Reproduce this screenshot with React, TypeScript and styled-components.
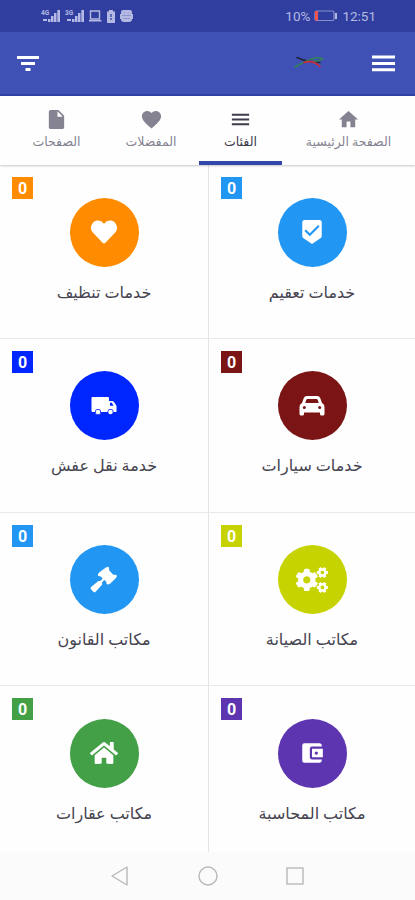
import React from 'react';
import styled, { createGlobalStyle } from 'styled-components';
import {
  MdInsertDriveFile, MdFavorite, MdMenu, MdHome, MdBeenhere, MdAccountBalanceWallet,
} from 'react-icons/md';
import { FaHeart, FaCogs, FaHome } from 'react-icons/fa';

const GlobalStyle = createGlobalStyle`
  * { box-sizing: border-box; }
  body { margin: 0; background: #fff; font-family: Roboto, "Noto Sans", "DejaVu Sans", sans-serif; }
`;

const Screen = styled.div`
  width: 415px;
  height: 900px;
  display: flex;
  flex-direction: column;
  overflow: hidden;
  background: #fefefe;
`;

const StatusBar = styled.header`
  height: 32px;
  flex: none;
  display: flex;
  align-items: center;
  justify-content: space-between;
  padding: 0 39px 0 41px;
  background: #303f9f;
  color: #b3b9e2;
`;

const StatusGroup = styled.div<{ $gap: number }>`
  display: flex;
  align-items: center;
  gap: ${p => p.$gap}px;
`;

const Reading = styled.span<{ $size: number }>`
  font-size: ${p => p.$size}px;
  line-height: 16px;
`;

const AppBar = styled.nav`
  height: 64px;
  flex: none;
  display: flex;
  align-items: center;
  padding: 0 20px 0 17px;
  background: #3f51b5;
  border-bottom: 2px solid #3142a4;
  color: #fff;
`;

const Brand = styled.div`
  margin-left: auto;
  margin-right: 47px;
  display: flex;
`;

const Tabs = styled.div`
  height: 69px;
  flex: none;
  display: flex;
  padding-left: 10px;
  box-shadow: 0 1px 2px rgba(0, 0, 0, 0.22);
  background: #fefefe;
  z-index: 1;
`;

const Tab = styled.div<{ $width: number; $active?: boolean }>`
  width: ${p => p.$width}px;
  display: flex;
  flex-direction: column;
  align-items: center;
  padding-top: 12px;
  border-bottom: 4px solid ${p => (p.$active ? '#3346aa' : 'transparent')};
  color: ${p => (p.$active ? '#3d3c4c' : '#858392')};
  font-size: 23px;
`;

const TabLabel = styled.span`
  margin-top: 1px;
  font-size: 12.500px;
  line-height: 20px;
  white-space: nowrap;
`;

const Grid = styled.main`
  flex: none;
  display: grid;
  grid-template-columns: 209px 206px;
  grid-auto-rows: 173.800px;
  height: 687px;
  overflow: hidden;
`;

const Cell = styled.section`
  position: relative;
  display: flex;
  flex-direction: column;
  align-items: center;
  padding-top: 32.500px;
  border-bottom: 1.500px solid #e9e9ea;
  &:nth-child(odd) { border-right: 1px solid #e4e4e6; }
`;

const Badge = styled.span<{ $color: string }>`
  position: absolute;
  top: 12px;
  left: 12px;
  width: 21px;
  height: 22px;
  background: ${p => p.$color};
  color: #fff;
  font-size: 16px;
  font-weight: 700;
  line-height: 23px;
  text-align: center;
`;

const Disc = styled.div<{ $color: string; $size: number }>`
  width: 69px;
  height: 69px;
  border-radius: 50%;
  display: flex;
  align-items: center;
  justify-content: center;
  background: ${p => p.$color};
  color: #fff;
  font-size: ${p => p.$size}px;
`;

const Caption = styled.span`
  margin-top: 11px;
  color: #45434f;
  font-size: 16px;
  line-height: 30px;
  white-space: nowrap;
`;

const SystemNav = styled.footer`
  flex: 1;
  display: flex;
  align-items: center;
  justify-content: center;
  gap: 68px;
  padding-right: 1px;
  background: #fbfbfb;
`;

const Truck = () => (
  <svg width="26" height="20" viewBox="0 0 26 20">
    <path
      d="M1.500 1H17q1 0 1 1v3h3q1 0 2 1l2 3q.5.7.5 1.500V16h-3a3 3 0 0 1-5.500 0H10a3 3 0 0 1-6 0H1.500q-1 0-1-1V2q0-1 1-1z"
      fill="currentColor"
    />
    <path d="M19 6.800h1.800l1.900 2.900H19z" fill="#0026ff" />
    <circle cx="7" cy="16" r="3" fill="#0026ff" />
    <circle cx="19.500" cy="16" r="3" fill="#0026ff" />
    <circle cx="7" cy="16" r="2.300" fill="currentColor" />
    <circle cx="19.500" cy="16" r="2.300" fill="currentColor" />
  </svg>
);

const Car = () => (
  <svg width="26" height="22" viewBox="0 0 26 22">
    <path
      d="M8 1h10q2.500 0 3.300 2.300L23 8q2.500 1 2.500 4v7q0 1.500-1.500 1.500h-1.500q-1.500 0-1.500-1.500v-1.500H5V19q0 1.500-1.500 1.500H2Q.5 20.500.5 19v-7q0-3 2.500-4l1.700-4.700Q5.500 1 8 1z"
      fill="currentColor"
    />
    <path d="M8.500 4h9q.9 0 1.200.9L19.800 8H6.200l1.100-3.100q.3-.9 1.200-.9z" fill="#7b1515" />
    <circle cx="5.300" cy="12.500" r="1.500" fill="#7b1515" />
    <circle cx="20.700" cy="12.500" r="1.500" fill="#7b1515" />
  </svg>
);

const Gavel = () => (
  <svg width="28" height="28" viewBox="0 0 28 28" fill="currentColor">
    <path d="M15.500 1.800 17.500.8q.8 0 1.500.8l.3 2.900 4 4.200 2.800.1q1 .7.7 1.700l-1.300 2-5.500 5.300-2 .8q-1 .1-1.500-.8l-.2-2-2-1.700-2.300 2.300.2 2-6.500 7.300q-1.200 1-2.400 0L.9 23.300q-.8-1.200.2-2.300l7.300-6 1.900-.1 2.300-2.400-1.800-1.900-2.400-.5q-.9-.8-.4-1.900l1.100-1.700z" />
  </svg>
);

type Category = { label: string; color: string; icon: React.ComponentType; size: number };

const categories: Category[] = [
  { label: 'خدمات تنظيف', color: '#ff8c00', icon: FaHeart, size: 26 },
  { label: 'خدمات تعقيم', color: '#2196f3', icon: MdBeenhere, size: 26 },
  { label: 'خدمة نقل عفش', color: '#0026ff', icon: Truck, size: 27 },
  { label: 'خدمات سيارات', color: '#7b1515', icon: Car, size: 27 },
  { label: 'مكاتب القانون', color: '#2196f3', icon: Gavel, size: 26 },
  { label: 'مكاتب الصيانة', color: '#c6d300', icon: FaCogs, size: 32 },
  { label: 'مكاتب عقارات', color: '#43a047', icon: FaHome, size: 28 },
  { label: 'مكاتب المحاسبة', color: '#5e35b1', icon: MdAccountBalanceWallet, size: 26 },
];

const tabs = [
  { label: 'الصفحات', icon: MdInsertDriveFile, width: 93 },
  { label: 'المفضلات', icon: MdFavorite, width: 96 },
  { label: 'الفئات', icon: MdMenu, width: 83, active: true },
  { label: 'الصفحة الرئيسية', icon: MdHome, width: 133 },
];

const Signal = ({ tag }: { tag: string }) => (
  <svg width="20" height="14" viewBox="0 0 20 14" fill="currentColor">
    <text x="0" y="5.500" fontSize="6.500" fontWeight="700" fontFamily="Roboto">{tag}</text>
    <path d="M2 10h4v2H2zM7 10h2.500v3H7zM10 7h2.500v6H10zM13 4h2.500v9H13zM16.300 1H19v12h-2.700z" />
  </svg>
);

export default function App() {
  return (
    <>
      <GlobalStyle />
      <Screen>
        <StatusBar>
          <StatusGroup $gap={4}>
            <Signal tag="4G" />
            <Signal tag="3G" />
            <svg width="13" height="12" viewBox="0.500 0 13 12" fill="none" stroke="currentColor" strokeWidth="1.400">
              <path d="M2 1h9v8H2zM0 10.800h13" />
            </svg>
            <svg width="10" height="13" viewBox="2 0 10 13">
              <path d="M5 0h4v1.500h2V13H3V1.500h2z" fill="currentColor" />
              <path d="M7 4v3M7 8v2" stroke="#303f9f" strokeWidth="1.300" />
            </svg>
            <svg width="13" height="13" viewBox="0 0 13 13">
              <path d="M3 0h7q2 0 2 2v2h1v5h-1q0 3-3 3H4Q1 12 1 9H0V4h1V2q0-2 2-2z" fill="currentColor" />
              <path d="M2 5.500h9M4 3h1M8 3h1M3 8.500h7" stroke="#8e97cc" />
            </svg>
          </StatusGroup>
          <StatusGroup $gap={4}>
            <Reading $size={13.500}>10%</Reading>
            <svg width="24" height="12" viewBox="0 0 24 12">
              <rect x="1" y="1" width="19" height="9.500" rx="1.500" fill="none" stroke="#8791ce" strokeWidth="1.200" />
              <path d="M21 3h2v6h-2z" fill="#b3b9e2" />
              <path d="M1 1h3v9.500H1z" fill="#ee5350" />
            </svg>
            <Reading $size={13.500}>12:51</Reading>
          </StatusGroup>
        </StatusBar>
        <AppBar>
          <svg width="22" height="17" viewBox="0 0 22 17" fill="#fff">
            <path d="M0 1h22v3H0zM4 7h14v3H4zM8.500 13h5v3h-5z" />
          </svg>
          <Brand>
            <svg width="32" height="14" viewBox="0 0 32 14" fill="none" strokeLinecap="round">
              <path d="M4 1.500Q11 5 18 5.500L27 6.500" stroke="#22243f" strokeWidth="1.500" />
              <path d="M2 11Q12 5 20 2.500Q25 1 30 3M20 5q6 1 9-2" stroke="#318354" strokeWidth="1.500" />
              <path d="M11 6.500Q20 3.500 27 10.500" stroke="#ce2940" strokeWidth="1.700" />
            </svg>
          </Brand>
          <svg width="23" height="17" viewBox="0 0 23 17" fill="#fff">
            <path d="M0 .5h23v3H0zM0 7h23v3H0zM0 13.300h23v3H0z" />
          </svg>
        </AppBar>
        <Tabs>
          {tabs.map(t => (
            <Tab key={t.label} $width={t.width} $active={t.active}>
              <t.icon />
              <TabLabel dir="rtl">{t.label}</TabLabel>
            </Tab>
          ))}
        </Tabs>
        <Grid>
          {categories.map(c => (
            <Cell key={c.label}>
              <Badge $color={c.color}>0</Badge>
              <Disc $color={c.color} $size={c.size}><c.icon /></Disc>
              <Caption dir="rtl">{c.label}</Caption>
            </Cell>
          ))}
        </Grid>
        <SystemNav>
          <svg width="20" height="22" viewBox="0 0 20 22" fill="none" stroke="#b8b8b8" strokeWidth="1.400">
            <path d="M2 11 17 2v18z" strokeLinejoin="round" />
          </svg>
          <svg width="20" height="20" viewBox="0 0 20 20" fill="none" stroke="#b8b8b8" strokeWidth="1.400">
            <circle cx="10" cy="10" r="9" />
          </svg>
          <svg width="18" height="18" viewBox="0 0 18 18" fill="none" stroke="#b8b8b8" strokeWidth="1.400">
            <rect x="1" y="1" width="16" height="16" />
          </svg>
        </SystemNav>
      </Screen>
    </>
  );
}
